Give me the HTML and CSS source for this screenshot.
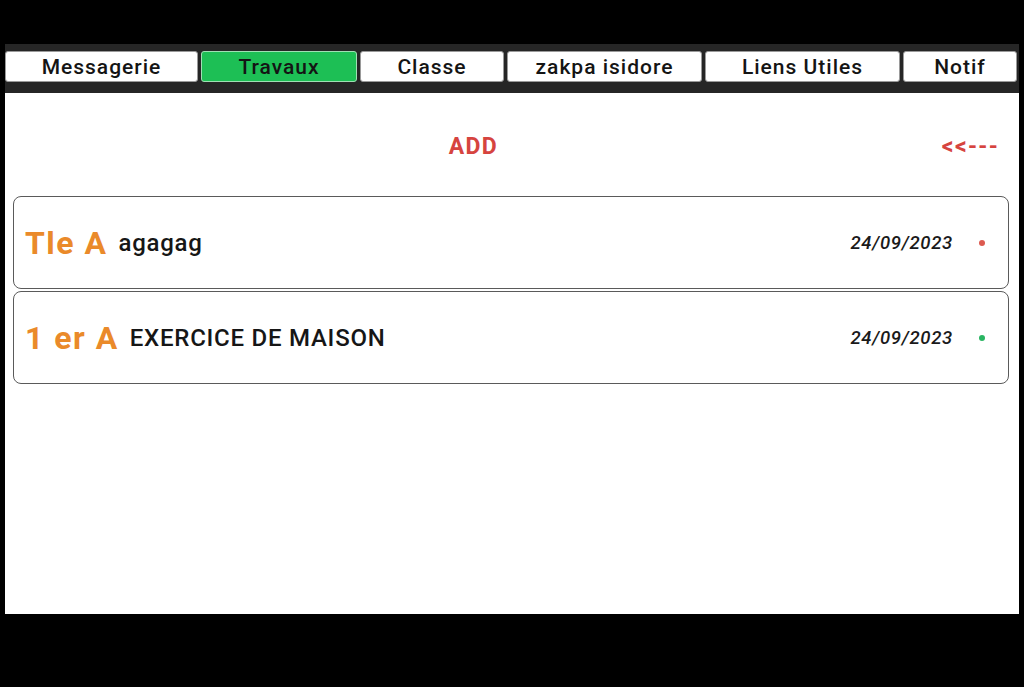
FILE: index.html
```html
<!DOCTYPE html>
<html lang="fr">
<head>
<meta charset="utf-8">
<title>Travaux</title>
<link rel="stylesheet" href="styles.css">
</head>
<body>
<div class="screen">
  <nav class="tabbar">
    <div class="tab">Messagerie</div>
    <div class="tab tab-active">Travaux</div>
    <div class="tab">Classe</div>
    <div class="tab">zakpa isidore</div>
    <div class="tab">Liens Utiles</div>
    <div class="tab">Notif</div>
  </nav>
  <main class="content">
    <div class="toolbar">
      <div class="add">ADD</div>
      <div class="back">&lt;&lt;---</div>
    </div>
    <div class="list">
      <div class="card">
        <span class="cls">Tle A</span>
        <span class="title">agagag</span>
        <span class="date">24/09/2023</span>
        <span class="dot dot-red"></span>
      </div>
      <div class="card">
        <span class="cls">1 er A</span>
        <span class="title">EXERCICE DE MAISON</span>
        <span class="date">24/09/2023</span>
        <span class="dot dot-green"></span>
      </div>
    </div>
  </main>
</div>
</body>
</html>
```

FILE: styles.css
```css
html, body {
  margin: 0;
  padding: 0;
  background: #000;
  height: 100%;
}
body {
  font-family: Roboto, "Liberation Sans", sans-serif;
}
.screen {
  margin: 44px 0 0 5px;
  width: 1014px;
  height: 570px;
  display: flex;
  flex-direction: column;
  background: #fff;
}
.tabbar {
  background: #262626;
  display: grid;
  grid-template-columns: 193px 156px 144px 195px 195px 114px;
  gap: 3px;
  padding: 7px 0 11px 0;
}
.tab {
  height: 29px;
  background: #fff;
  border: 1px solid #9a9a9a;
  border-radius: 3px;
  display: flex;
  align-items: center;
  justify-content: center;
  font-size: 21px;
  font-weight: 500;
  letter-spacing: 1px;
  color: #141414;
}
.tab-active {
  background: #1dbf55;
  border-color: #9fe0b4;
}
.content {
  flex: 1;
  background: #fff;
}
.toolbar {
  height: 103px;
  display: flex;
  align-items: center;
}
.add {
  flex: 1;
  text-align: center;
  color: #d6443f;
  font-size: 23px;
  font-weight: 700;
  letter-spacing: 1.3px;
  padding-top: 3px;
}
.back {
  color: #d6443f;
  font-size: 23px;
  font-weight: 700;
  letter-spacing: 1.3px;
  padding: 3px 20px 0 0;
}
.list {
  display: flex;
  flex-direction: column;
  gap: 2px;
  margin: 0 10px 0 8px;
}
.card {
  height: 91px;
  border: 1px solid #5a5a5a;
  border-radius: 8px;
  display: flex;
  align-items: center;
  padding: 0 23px 0 11px;
}
.cls {
  color: #ea8a2a;
  font-size: 32px;
  font-weight: 700;
  letter-spacing: 1.5px;
  margin-right: 11px;
}
.title {
  flex: 1;
  color: #161616;
  font-size: 24px;
  font-weight: 500;
  letter-spacing: 0.75px;
}
.date {
  color: #1a1a1a;
  font-size: 18.5px;
  font-weight: 500;
  font-style: italic;
  letter-spacing: 0.7px;
  margin-right: 26px;
}
.dot {
  width: 6px;
  height: 6px;
  border-radius: 50%;
}
.dot-red {
  background: #dc5a50;
}
.dot-green {
  background: #29b562;
}
```
